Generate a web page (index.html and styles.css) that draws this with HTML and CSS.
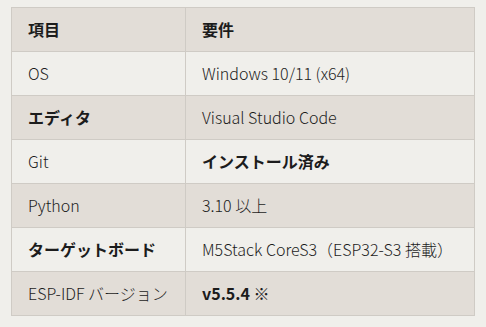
FILE: index.html
```html
<!DOCTYPE html>
<html lang="ja">
<head>
<meta charset="utf-8">
<link rel="stylesheet" href="styles.css">
</head>
<body>
<table class="spec">
  <thead>
    <tr><th class="c1">項目</th><th>要件</th></tr>
  </thead>
  <tbody>
    <tr><td>OS</td><td>Windows 10/11 (x64)</td></tr>
    <tr><td><strong>エディタ</strong></td><td>Visual Studio Code</td></tr>
    <tr><td>Git</td><td><strong>インストール済み</strong></td></tr>
    <tr><td>Python</td><td>3.10 以上</td></tr>
    <tr><td><strong>ターゲットボード</strong></td><td>M5Stack CoreS3（ESP32-S3 搭載）</td></tr>
    <tr><td>ESP-IDF バージョン</td><td><strong>v5.5.4</strong> ※</td></tr>
  </tbody>
</table>
</body>
</html>
```
FILE: styles.css
```css
html, body {
  margin: 0;
  padding: 0;
  background: #f0efeb;
}
body {
  padding: 7px 12px 0 11px;
  font-family: "Noto Sans CJK JP", "Noto Sans", sans-serif;
  color: #1c1c1c;
}
.spec {
  border-collapse: collapse;
  width: 464px;
  font-size: 16px;
}
.spec th, .spec td {
  border: 1px solid #cfcbc5;
  height: 43px;
  padding: 0 16px;
  text-align: left;
  vertical-align: middle;
  font-weight: 300;
  line-height: 1.2;
}
.spec th {
  font-weight: 700;
  background: #e2ddd7;
}
.spec .c1 { width: 141px; }
.spec tbody tr:nth-child(odd) td { background: #f0efeb; }
.spec tbody tr:nth-child(even) td { background: #e2ddd7; }
.spec strong { font-weight: 700; }
```
